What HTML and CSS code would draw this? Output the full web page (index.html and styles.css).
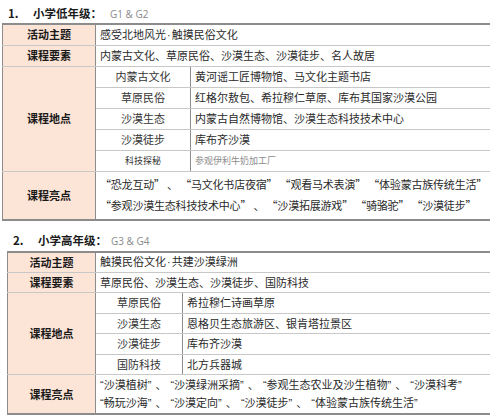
FILE: index.html
```html
<!DOCTYPE html>
<html lang="zh-CN">
<head>
<meta charset="utf-8">
<link rel="stylesheet" href="styles.css">
</head>
<body>
<div class="page">
  <section class="block block1">
    <h2 class="heading"><span class="num">1.</span><span class="name">小学低年级：</span><span class="grade">G1 &amp; G2</span></h2>
    <table class="plan">
      <colgroup><col class="c-label"><col class="c-sub"><col></colgroup>
      <tr class="r">
        <th class="label">活动主题</th>
        <td colspan="2" class="txt">感受北地风光<span class="dot">·</span>触摸民俗文化</td>
      </tr>
      <tr class="r">
        <th class="label">课程要素</th>
        <td colspan="2" class="txt">内蒙古文化、草原民俗、沙漠生态、沙漠徒步、名人故居</td>
      </tr>
      <tr class="r">
        <th class="label" rowspan="5">课程地点</th>
        <td class="sub">内蒙古文化</td>
        <td class="txt">黄河谣工匠博物馆、马文化主题书店</td>
      </tr>
      <tr class="r"><td class="sub">草原民俗</td><td class="txt">红格尔敖包、希拉穆仁草原、库布其国家沙漠公园</td></tr>
      <tr class="r"><td class="sub">沙漠生态</td><td class="txt">内蒙古自然博物馆、沙漠生态科技技术中心</td></tr>
      <tr class="r"><td class="sub">沙漠徒步</td><td class="txt">库布齐沙漠</td></tr>
      <tr class="r faint"><td class="sub">科技探秘</td><td class="txt">参观伊利牛奶加工厂</td></tr>
      <tr>
        <th class="label">课程亮点</th>
        <td colspan="2" class="hl">“恐龙互动” 、 “马文化书店夜宿” “观看马术表演” “体验蒙古族传统生活”<br>“参观沙漠生态科技技术中心” 、 “沙漠拓展游戏” “骑骆驼” “沙漠徒步”</td>
      </tr>
    </table>
  </section>

  <section class="block block2">
    <h2 class="heading"><span class="num">2.</span><span class="name">小学高年级：</span><span class="grade">G3 &amp; G4</span></h2>
    <table class="plan plan2">
      <colgroup><col class="c-label2"><col class="c-sub2"><col></colgroup>
      <tr class="r2">
        <th class="label">活动主题</th>
        <td colspan="2" class="txt">触摸民俗文化<span class="dot">·</span>共建沙漠绿洲</td>
      </tr>
      <tr class="r2">
        <th class="label">课程要素</th>
        <td colspan="2" class="txt">草原民俗、沙漠生态、沙漠徒步、国防科技</td>
      </tr>
      <tr class="r2">
        <th class="label" rowspan="4">课程地点</th>
        <td class="sub">草原民俗</td>
        <td class="txt">希拉穆仁诗画草原</td>
      </tr>
      <tr class="r2"><td class="sub">沙漠生态</td><td class="txt">恩格贝生态旅游区、银肯塔拉景区</td></tr>
      <tr class="r2"><td class="sub">沙漠徒步</td><td class="txt">库布齐沙漠</td></tr>
      <tr class="r2"><td class="sub">国防科技</td><td class="txt">北方兵器城</td></tr>
      <tr>
        <th class="label">课程亮点</th>
        <td colspan="2" class="hl hl2">“沙漠植树” 、 “沙漠绿洲采摘” 、 “参观生态农业及沙生植物” 、 “沙漠科考”<br>“畅玩沙海” 、 “沙漠定向” 、 “沙漠徒步” 、 “体验蒙古族传统生活”</td>
      </tr>
    </table>
  </section>
</div>
</body>
</html>
```

FILE: styles.css
```css
* { box-sizing: border-box; }
html, body { margin: 0; padding: 0; background: #ffffff; }
body {
  font-family: "Noto Sans CJK SC", "Noto Sans", sans-serif;
  color: #222222;
  width: 500px;
  height: 417px;
  overflow: hidden;
}
.page { display: flex; flex-direction: column; }
.block1 { padding: 4px 0 0 2px; }
.block2 { padding: 11px 0 0 7px; }
.heading {
  margin: 0;
  height: 19px;
  display: flex;
  align-items: center;
  font-size: 11.5px;
  font-weight: bold;
  color: #1a1a1a;
  line-height: 1;
}
.block1 .heading { padding-left: 6px; }
.block2 .heading { padding-left: 6px; }
.num { width: 25px; }
.name { margin-right: 8px; }
.grade { font-weight: normal; font-size: 10px; color: #8a8a8a; font-family: "Open Sans", "Noto Sans", sans-serif; }
.block2 .name { margin-right: 4px; }

.plan {
  border-collapse: collapse;
  table-layout: fixed;
  width: 488px;
  font-size: 11px;
  line-height: 1;
}
.plan2 { width: 483px; }
.c-label { width: 93px; }
.c-sub { width: 95px; }
.c-label2 { width: 88px; }
.c-sub2 { width: 87px; }
.plan th, .plan td {
  padding: 0;
  border: 1px solid #c8c8c8;
  vertical-align: middle;
}
.plan { border-top: 2px solid #8c8c8c; border-bottom: 2px solid #8c8c8c; }
.label {
  background: #fce4d6;
  font-weight: bold;
  text-align: center;
  color: #1a1a1a;
  border-left: 1px solid #8c8c8c !important;
  border-right: 1px solid #8c8c8c !important;
  border-top: 1px solid #8c8c8c !important;
}
.plan td { border-left: none; border-right: none; }
.plan td.sub { border-right: 1px solid #8c8c8c; text-align: center; color: #333; }
.r { height: 21px; }
.r2 { height: 20.5px; }
.txt { padding-left: 4px !important; color: #2a2a2a; white-space: nowrap; }
.dot { font-family: "Liberation Sans", sans-serif; padding: 0 1px; }
.faint td { font-size: 9px; color: #8c8c8c; }
.hl { padding: 2px 0 3px 4px !important; line-height: 21px; white-space: nowrap; color: #2a2a2a; letter-spacing: -0.2px; }
.hl2 {
  font-family: "Liberation Sans", "Noto Sans CJK SC", sans-serif;
  line-height: 18px;
  padding: 1px 0 1px 4px !important;
  font-size: 11px;
  letter-spacing: 0;
  word-spacing: 1px;
}
.plan tr:last-child td, .plan tr:last-child th { border-top: 1px solid #8c8c8c !important; }
```
